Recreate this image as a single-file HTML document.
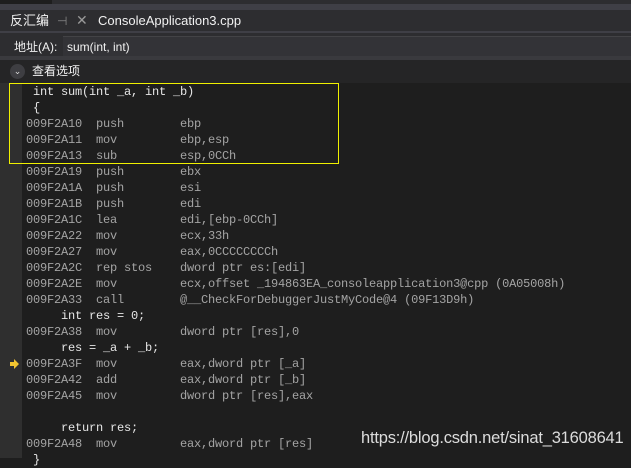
<!DOCTYPE html><html><head><meta charset="utf-8"><style>
body{margin:0;width:631px;height:458px;overflow:hidden;background:#1e1e1e;position:relative;font-family:"Liberation Sans","Noto Sans CJK SC",sans-serif}
.a{position:absolute}
.code{position:absolute;left:0;top:84px;width:631px}
.r{height:16px;line-height:16px;font-family:"Liberation Mono","Noto Sans CJK SC",monospace;font-size:12px;letter-spacing:-0.2px;white-space:pre;color:#a4a4a4;padding-left:26px;position:relative}
.s{color:#e6e6e6}
</style></head><body>
<div class="a" style="left:0;top:0;width:631px;height:83px;background:#2d2d30"></div>
<div class="a" style="left:0;top:4px;width:631px;height:6px;background:#3f3f46"></div>
<div class="a" style="left:0;top:0;width:52px;height:4px;background:#1e1e1e"></div>
<div class="a" style="left:10px;top:12px;font-size:13px;color:#f1f1f1;line-height:18px">反汇编</div>
<div class="a" style="left:57px;top:12px;font-size:12px;color:#888;line-height:18px">⊣</div>
<div class="a" style="left:76px;top:11px;font-size:14px;color:#999;line-height:18px">✕</div>
<div class="a" style="left:98px;top:12px;font-size:13px;color:#f1f1f1;line-height:18px">ConsoleApplication3.cpp</div>
<div class="a" style="left:0;top:31px;width:631px;height:2px;background:#3f3f46"></div>
<div class="a" style="left:14px;top:38px;font-size:12px;color:#f1f1f1;line-height:18px">地址(A):</div>
<div class="a" style="left:63px;top:36px;width:568px;height:20px;background:#333337;border-top:1px solid #434346"></div>
<div class="a" style="left:67px;top:38px;font-size:12px;color:#f1f1f1;line-height:18px">sum(int, int)</div>
<div class="a" style="left:0;top:56px;width:631px;height:4px;background:#3a3a3e"></div>
<div class="a" style="left:0;top:60px;width:631px;height:23px;background:#252526"></div>
<div class="a" style="left:10px;top:64px;width:15px;height:15px;border-radius:50%;background:#3e3e42;color:#ddd;font-size:9px;line-height:15px;text-align:center">⌄</div>
<div class="a" style="left:32px;top:62px;font-size:12px;color:#f1f1f1;line-height:18px">查看选项</div>
<div class="a" style="left:0;top:83px;width:22px;height:375px;background:#2f2f2f"></div>
<div class="code">
<div class="r s"> int sum(int _a, int _b)</div>
<div class="r s"> {</div>
<div class="r">009F2A10  push        ebp</div>
<div class="r">009F2A11  mov         ebp,esp</div>
<div class="r">009F2A13  sub         esp,0CCh</div>
<div class="r">009F2A19  push        ebx</div>
<div class="r">009F2A1A  push        esi</div>
<div class="r">009F2A1B  push        edi</div>
<div class="r">009F2A1C  lea         edi,[ebp-0CCh]</div>
<div class="r">009F2A22  mov         ecx,33h</div>
<div class="r">009F2A27  mov         eax,0CCCCCCCCh</div>
<div class="r">009F2A2C  rep stos    dword ptr es:[edi]</div>
<div class="r">009F2A2E  mov         ecx,offset _194863EA_consoleapplication3@cpp (0A05008h)</div>
<div class="r">009F2A33  call        @__CheckForDebuggerJustMyCode@4 (09F13D9h)</div>
<div class="r s">     int res = 0;</div>
<div class="r">009F2A38  mov         dword ptr [res],0</div>
<div class="r s">     res = _a + _b;</div>
<div class="r"><svg style="position:absolute;left:10px;top:3px" width="10" height="10" viewBox="0 0 10 10"><path d="M0 3H4V0L9 5L4 10V7H0Z" fill="#f2c530"/></svg>009F2A3F  mov         eax,dword ptr [_a]</div>
<div class="r">009F2A42  add         eax,dword ptr [_b]</div>
<div class="r">009F2A45  mov         dword ptr [res],eax</div>
<div class="r"> </div>
<div class="r s">     return res;</div>
<div class="r">009F2A48  mov         eax,dword ptr [res]</div>
<div class="r s"> }</div>
</div>
<div class="a" style="left:9px;top:83px;width:328px;height:79px;border:1px solid #f0f000"></div>
<div class="a" style="left:361px;top:429px;font-size:16.5px;color:#dcdcdc;line-height:18px;letter-spacing:-0.2px">https://blog.csdn.net/sinat_31608641</div>
</body></html>
